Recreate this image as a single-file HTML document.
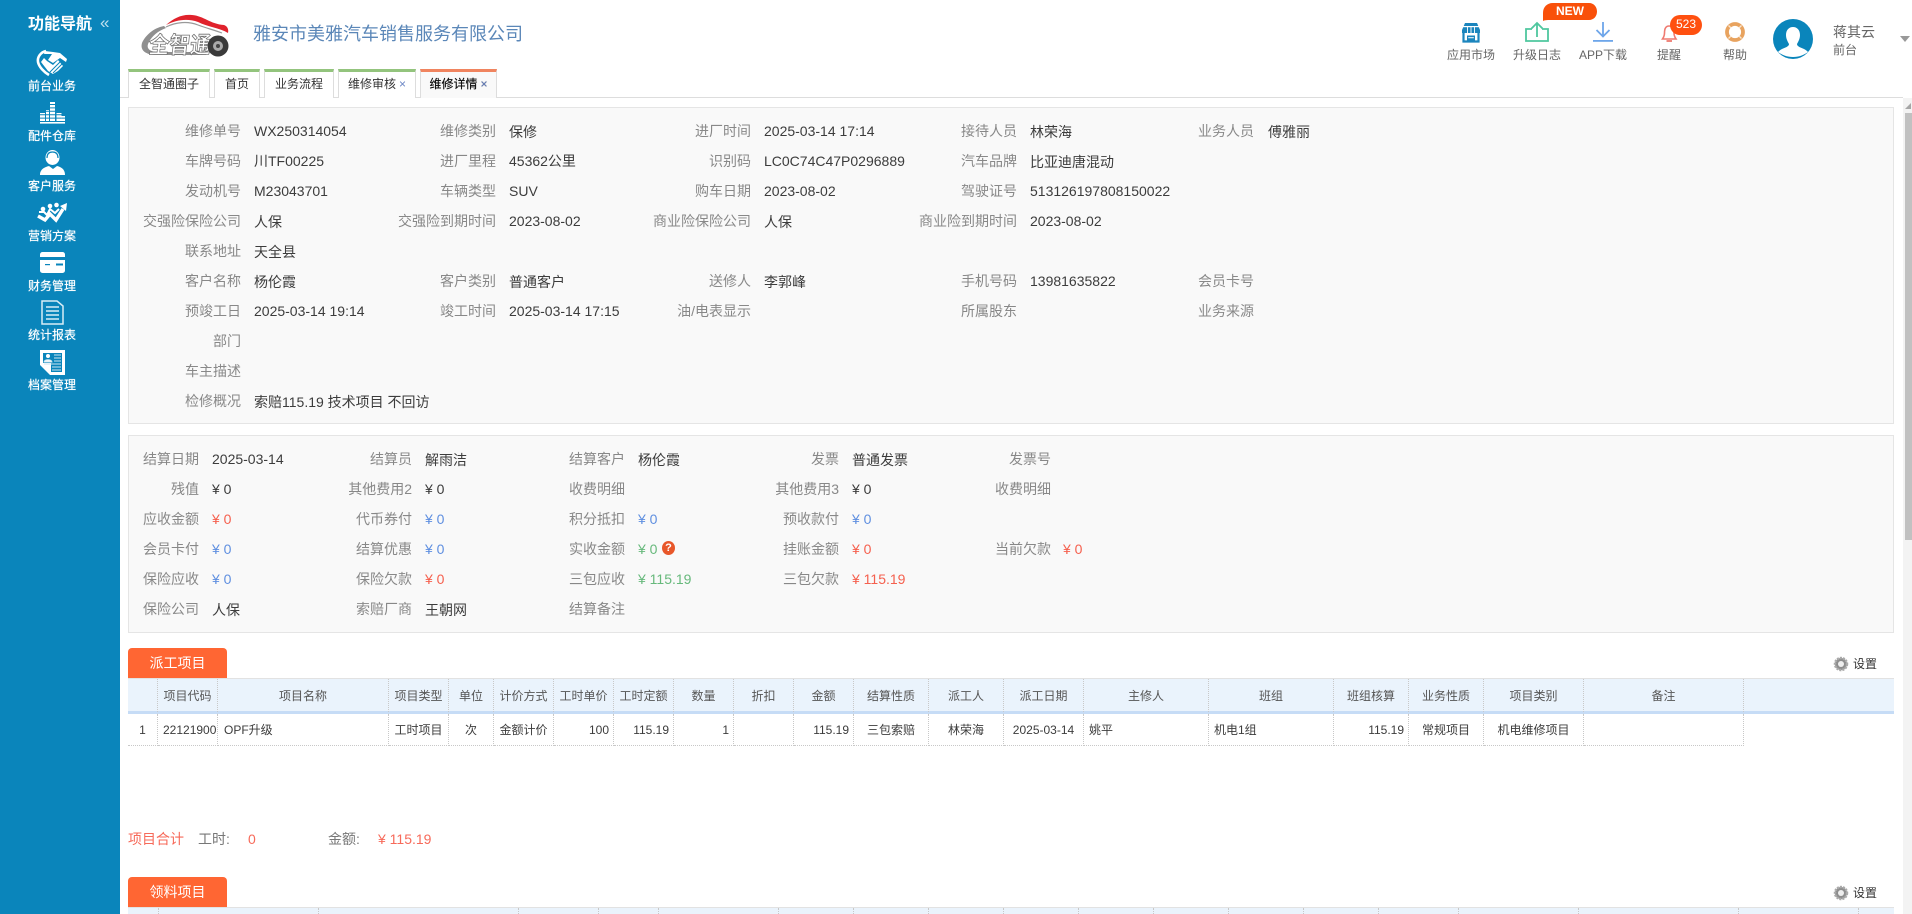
<!DOCTYPE html>
<html lang="zh-CN">
<head>
<meta charset="utf-8">
<title>维修详情</title>
<style>
*{box-sizing:border-box}
html,body{margin:0;padding:0;width:1912px;height:914px;overflow:hidden;background:#fff}
body{position:relative;font-family:"Liberation Sans","Noto Sans CJK SC",sans-serif;font-size:14px;color:#3c3c3c}
.abs{position:absolute}
#side{position:absolute;left:0;top:0;width:120px;height:914px;background:#0a85bb;color:#fff}
#side .t{position:absolute;left:28px;top:14px;font-size:16px;line-height:22px;font-weight:bold;white-space:nowrap}
#side .m{position:absolute;left:0;width:104px;text-align:center;font-size:12px;line-height:16px;white-space:nowrap;text-shadow:0 0 .6px #fff}
#side .cl{position:absolute;left:100px;top:13px;font-size:17px;line-height:20px;color:#bfe0ee}
.co{position:absolute;left:253px;top:21px;font-size:18px;line-height:26px;color:#5b87b8;white-space:nowrap}
.tb{position:absolute;top:69px;height:29px;background:#fff;border:1px solid #ddd;border-top:3px solid #93c47d;border-bottom:0;font-size:12px;line-height:25px;text-align:center;white-space:nowrap;color:#333}
.tb i{font-style:normal;color:#6a85c4;margin-left:3px}
.tb.on{border-top-color:#f0845f;background:#f9f9f9;color:#111;text-shadow:0 0 .4px #111}
.hl{position:absolute;width:80px;margin-left:-40px;text-align:center;font-size:12px;line-height:16px;color:#666;white-space:nowrap;top:47px}
.panel{position:absolute;left:128px;width:1766px;background:#f9f9f9;border:1px solid #e5e5e5}
.r{position:absolute;left:0;top:0;width:1912px;height:20px;line-height:20px;white-space:nowrap}
.r span{position:absolute;top:0;white-space:nowrap}
.r span.z{top:1px}
.l{color:#888;width:200px;text-align:right}
.a{left:41px}.b{left:296px}.c{left:551px}.d{left:817px}.e{left:1054px}
.f{left:254px}.g{left:509px}.h{left:764px}.i{left:1030px}.j{left:1268px}
.k{left:-1px}.m2{left:212px}.n{left:425px}.o{left:639px}.q{left:851px}
.s{left:212px}.u{left:425px}.w{left:638px}.x{left:852px}.y{left:1063px}
.red{color:#f5604e}.blue{color:#5f8fe0}.green{color:#67b97c}
.btn{position:absolute;left:128px;width:99px;height:30px;background:#ff6633;border-radius:4px 4px 0 0;color:#fff;font-size:14px;line-height:30px;text-align:center}
.set{position:absolute;left:1853px;font-size:12px;line-height:16px;color:#333}
.hbg{position:absolute;left:128px;width:1766px;background:#eaf3fc;border-top:1px solid #e2e2e2}
table{position:absolute;left:128px;top:679px;width:1616px;table-layout:fixed;border-collapse:separate;border-spacing:0;font-size:12px}
th,td{padding:0 4px;white-space:nowrap;overflow:hidden;border-right:1px dotted #c8c8c8;text-align:center;font-weight:normal}
th{height:35px;border-bottom:3px solid transparent;color:#555;padding:0}
td{height:32px;border-bottom:1px dotted #c8c8c8;color:#3c3c3c}
td.rt{text-align:right}td.lf{text-align:left;padding-left:5px;padding-right:0}
.sum{position:absolute;top:829px;font-size:14px;line-height:20px;white-space:nowrap}
.tick{position:absolute;top:908px;height:6px;width:0;border-left:1px dotted #c8c8c8}
</style>
</head>
<body>

<div id="side">
  <div class="t">功能导航</div>
  <div class="cl">«</div>
  <svg class="abs" style="left:0;top:0" width="120" height="400" viewBox="0 0 120 400">
    <!-- handshake -->
    <path d="M46 51C41 52 37 57 38 62C39 67 44 72 49 75" fill="none" stroke="#fff" stroke-width="2.6"/>
    <path d="M44 54L52 54L48 60L53 63L60 58L66 62L67 59L60 53L53 52L45 51Z" fill="#fff"/>
    <path d="M41 62L48 71L53 74L58 71L63 66L58 60L53 65L47 61L44 58Z" fill="#fff"/>
    <path d="M50 72L60 62M53 73L62 64" stroke="#0a85bb" stroke-width="1"/>
    <!-- bars -->
    <g stroke="#fff" fill="none" stroke-dasharray="2.4 1">
      <path d="M42.500 121V113" stroke-width="5"/>
      <path d="M47.500 121V110" stroke-width="3"/>
      <path d="M52.500 121V102" stroke-width="5"/>
      <path d="M59 121V113" stroke-width="5"/>
      <path d="M63 121V116" stroke-width="4"/>
    </g>
    <rect x="40" y="122" width="25" height="1.600" fill="#fff"/>
    <!-- person with headset -->
    <ellipse cx="52.500" cy="157.500" rx="7" ry="7.500" fill="#fff"/>
    <path d="M47 158C47 154 49 152 52.500 152C56 152 58 154 58 158" fill="none" stroke="#0a85bb" stroke-width="1.200"/>
    <path d="M40 175C40 169 45 167 49 166L53 169L57 166C61 167 65 169 65 175Z" fill="#fff"/>
    <path d="M48 165L54 167" stroke="#0a85bb" stroke-width="1"/>
    <!-- chart arrow -->
    <path d="M38 216L45 220L50 214L56 220L63 209" fill="none" stroke="#fff" stroke-width="3.400"/>
    <path d="M60 206L67 203L66 211Z" fill="#fff"/>
    <circle cx="43" cy="209" r="2.300" fill="#fff"/><circle cx="50" cy="206" r="2.300" fill="#fff"/><circle cx="56.500" cy="205" r="2.300" fill="#fff"/>
    <path d="M39 212L44 212L47 215L50 209L55 213L59 209" fill="none" stroke="#fff" stroke-width="2"/>
    <!-- card -->
    <rect x="40" y="252" width="25" height="21" rx="2.500" fill="#fff"/>
    <rect x="40" y="257" width="25" height="3" fill="#0a85bb"/>
    <rect x="45" y="264" width="5" height="1.200" fill="#0a85bb"/>
    <rect x="56" y="263.500" width="7" height="2" fill="#0a85bb"/>
    <!-- doc -->
    <path d="M42 301H57L63 306V324H42Z" fill="none" stroke="#d8edf6" stroke-width="1.500"/>
    <path d="M46 307H59M46 311H59M46 315H59M46 319H59" stroke="#d8edf6" stroke-width="1.400"/>
    <!-- profile -->
    <path d="M40 350H65V375H50L40 365Z" fill="#fff"/>
    <path d="M43 353H62V372H51L51 363L43 363Z" fill="#0a85bb"/>
    <circle cx="48" cy="356" r="2" fill="#fff"/>
    <path d="M44 362C44 359 52 359 52 362ZM54 355H61M54 358H61M54 361H61M44 364H61M52 367H61M52 370H61" fill="#fff" stroke="#cfe6f1" stroke-width=".9"/>
  </svg>
  <div class="m" style="top:78px">前台业务</div>
  <div class="m" style="top:128px">配件仓库</div>
  <div class="m" style="top:178px">客户服务</div>
  <div class="m" style="top:228px">营销方案</div>
  <div class="m" style="top:278px">财务管理</div>
  <div class="m" style="top:327px">统计报表</div>
  <div class="m" style="top:377px">档案管理</div>
</div>

<!-- logo -->
<svg class="abs" style="left:136px;top:10px" width="100" height="50" viewBox="136 10 100 50">
  <path d="M166 25C174 18 182 14 192 15C204 16 210 24 224 25C227 26 229 29 228 33C220 28 208 27 198 22C187 18 176 20 166 25Z" fill="#e0222c"/>
  <path d="M166 27C176 22 188 21 198 25C206 28 214 30 222 33" fill="none" stroke="#999" stroke-width="1.200"/>
  <path d="M164 26C153 28 145 36 142 43C140 50 145 54 154 55H206V52H156C148 51 146 47 149 42C152 36 158 31 166 28Z" fill="#8f8f8f"/>
  <text transform="translate(148 53) skewX(-6)" x="0" y="0" font-family="'Noto Sans CJK SC',sans-serif" font-size="23" font-weight="bold" fill="#fff" stroke="#707070" stroke-width=".8" textLength="62" lengthAdjust="spacingAndGlyphs">全智通</text>
  <circle cx="218" cy="46" r="10.500" fill="#3a3a3a"/>
  <circle cx="218" cy="46" r="5" fill="#aaa"/>
  <circle cx="218" cy="46" r="2" fill="#444"/>
</svg>
<div class="co">雅安市美雅汽车销售服务有限公司</div>

<!-- top icons -->
<svg class="abs" style="left:1440px;top:0" width="472" height="64" viewBox="1440 0 472 64">
  <!-- store -->
  <path d="M1465 23H1477L1480 30V33H1462V30Z" fill="#1b85bd"/>
  <rect x="1463" y="26" width="16" height="1.200" fill="#fff"/>
  <path d="M1467.500 27V33M1471 27V33M1474.500 27V33" stroke="#fff" stroke-width=".9"/>
  <path d="M1463.500 33V41.500H1478.500V33" fill="none" stroke="#1b85bd" stroke-width="2.200"/>
  <rect x="1467" y="35.500" width="8" height="5.500" fill="#1b85bd"/>
  <rect x="1468.200" y="37.200" width="5.600" height="1" fill="#fff"/>
  <!-- upload -->
  <path d="M1532 29H1526V41H1548V29H1542" fill="none" stroke="#4fc79f" stroke-width="1.800"/>
  <path d="M1537 37V23M1531.500 28.500L1537 23L1542.500 28.500" fill="none" stroke="#4fc79f" stroke-width="1.800"/>
  <!-- NEW -->
  <path d="M1543 21V13C1543 7 1547 3 1553 3H1589C1594 3 1597 7 1597 11.500C1597 16 1594 20 1589 20H1552C1548 20 1545 20 1543 21Z" fill="#f9500a"/>
  <!-- download -->
  <path d="M1603 22V36M1596.500 30L1603 36.500L1609.500 30" fill="none" stroke="#6ea6ea" stroke-width="1.800"/>
  <rect x="1593" y="40" width="20" height="1.800" fill="#6ea6ea"/>
  <!-- bell -->
  <path d="M1669 26C1665 26 1664.500 30 1664.500 33C1664.500 36 1663.500 37.500 1662.500 39H1676C1675 37.500 1674 36 1674 33C1674 30 1673 26 1669 26Z" fill="none" stroke="#ef7a70" stroke-width="1.600"/>
  <path d="M1666.500 41H1672" stroke="#ef7a70" stroke-width="1.800"/>
  <rect x="1670" y="15" width="32" height="20" rx="10" fill="#ff5010"/>
  <!-- help -->
  <circle cx="1735" cy="32" r="8" fill="none" stroke="#e8a35f" stroke-width="3.800"/>
  <path d="M1728.500 25.500L1731 28M1741.500 25.500L1739 28M1728.500 38.500L1731 36M1741.500 38.500L1739 36" stroke="#f8e6d2" stroke-width="1.400"/>
  <!-- avatar -->
  <circle cx="1793" cy="39" r="20" fill="#0a85bb"/>
  <path d="M1786 35C1786 30 1789 27 1793 27C1797 27 1800 30 1800 35C1800 39 1798 42 1797 44C1797 46 1799 47 1804 49C1806 50 1807 51 1808 52C1804 55 1799 57 1793 57C1787 57 1782 55 1778 52C1779 51 1780 50 1782 49C1787 47 1789 46 1789 44C1788 42 1786 39 1786 35Z" fill="#fff"/>
  <!-- caret -->
  <path d="M1900 36H1910L1905 42Z" fill="#999"/>
</svg>
<div class="abs" style="left:1543px;top:3px;width:54px;height:17px;line-height:17px;text-align:center;color:#fff;font-size:12px;font-weight:bold">NEW</div>
<div class="abs" style="left:1670px;top:15px;width:32px;height:20px;line-height:19px;text-align:center;color:#fff;font-size:12px">523</div>
<div class="hl" style="left:1471px">应用市场</div>
<div class="hl" style="left:1537px">升级日志</div>
<div class="hl" style="left:1603px">APP下载</div>
<div class="hl" style="left:1669px">提醒</div>
<div class="hl" style="left:1735px">帮助</div>
<div class="abs" style="left:1833px;top:22px;font-size:14px;line-height:20px;color:#666">蒋其云</div>
<div class="abs" style="left:1833px;top:42px;font-size:12px;line-height:16px;color:#666">前台</div>

<!-- tabs -->
<div class="abs" style="left:120px;top:97px;width:1783px;height:1px;background:#ddd"></div>
<div class="tb" style="left:128px;width:82px">全智通圈子</div>
<div class="tb" style="left:214px;width:46px">首页</div>
<div class="tb" style="left:264px;width:70px">业务流程</div>
<div class="tb" style="left:338px;width:78px">维修审核<i>×</i></div>
<div class="tb on" style="left:420px;width:77px">维修详情<i>×</i></div>

<!-- scrollbar -->
<div class="abs" style="left:1903px;top:98px;width:9px;height:816px;background:#f3f3f3"></div>
<div class="abs" style="left:1905px;top:113px;width:7px;height:427px;background:#c1c1c1"></div>
<svg class="abs" style="left:1903px;top:102px" width="9" height="8"><path d="M2 7H8V1Z" fill="#a6a6a6"/></svg>

<!-- panel 1 -->
<div class="panel" style="top:107px;height:317px"></div>
<div class="r" style="top:121px"><span class="l a">维修单号</span><span class="f">WX250314054</span><span class="l b">维修类别</span><span class="g z">保修</span><span class="l c">进厂时间</span><span class="h">2025-03-14 17:14</span><span class="l d">接待人员</span><span class="i z">林荣海</span><span class="l e">业务人员</span><span class="j z">傅雅丽</span></div>
<div class="r" style="top:151px"><span class="l a">车牌号码</span><span class="f">川TF00225</span><span class="l b">进厂里程</span><span class="g">45362公里</span><span class="l c">识别码</span><span class="h">LC0C74C47P0296889</span><span class="l d">汽车品牌</span><span class="i z">比亚迪唐混动</span></div>
<div class="r" style="top:181px"><span class="l a">发动机号</span><span class="f">M23043701</span><span class="l b">车辆类型</span><span class="g">SUV</span><span class="l c">购车日期</span><span class="h">2023-08-02</span><span class="l d">驾驶证号</span><span class="i">513126197808150022</span></div>
<div class="r" style="top:211px"><span class="l a">交强险保险公司</span><span class="f z">人保</span><span class="l b">交强险到期时间</span><span class="g">2023-08-02</span><span class="l c">商业险保险公司</span><span class="h z">人保</span><span class="l d">商业险到期时间</span><span class="i">2023-08-02</span></div>
<div class="r" style="top:241px"><span class="l a">联系地址</span><span class="f z">天全县</span></div>
<div class="r" style="top:271px"><span class="l a">客户名称</span><span class="f z">杨伦霞</span><span class="l b">客户类别</span><span class="g z">普通客户</span><span class="l c">送修人</span><span class="h z">李郭峰</span><span class="l d">手机号码</span><span class="i">13981635822</span><span class="l e">会员卡号</span></div>
<div class="r" style="top:301px"><span class="l a">预竣工日</span><span class="f">2025-03-14 19:14</span><span class="l b">竣工时间</span><span class="g">2025-03-14 17:15</span><span class="l c">油/电表显示</span><span class="l d">所属股东</span><span class="l e">业务来源</span></div>
<div class="r" style="top:331px"><span class="l a">部门</span></div>
<div class="r" style="top:361px"><span class="l a">车主描述</span></div>
<div class="r" style="top:391px"><span class="l a">检修概况</span><span class="f z">索赔115.19 技术项目 不回访</span></div>

<!-- panel 2 -->
<div class="panel" style="top:435px;height:198px"></div>
<div class="r" style="top:449px"><span class="l k">结算日期</span><span class="s">2025-03-14</span><span class="l m2">结算员</span><span class="u z">解雨洁</span><span class="l n">结算客户</span><span class="w z">杨伦霞</span><span class="l o">发票</span><span class="x z">普通发票</span><span class="l q">发票号</span></div>
<div class="r" style="top:479px"><span class="l k">残值</span><span class="s">¥ 0</span><span class="l m2">其他费用2</span><span class="u">¥ 0</span><span class="l n">收费明细</span><span class="l o">其他费用3</span><span class="x">¥ 0</span><span class="l q">收费明细</span></div>
<div class="r" style="top:509px"><span class="l k">应收金额</span><span class="s red">¥ 0</span><span class="l m2">代币券付</span><span class="u blue">¥ 0</span><span class="l n">积分抵扣</span><span class="w blue">¥ 0</span><span class="l o">预收款付</span><span class="x blue">¥ 0</span></div>
<div class="r" style="top:539px"><span class="l k">会员卡付</span><span class="s blue">¥ 0</span><span class="l m2">结算优惠</span><span class="u blue">¥ 0</span><span class="l n">实收金额</span><span class="w green">¥ 0</span><span class="l o">挂账金额</span><span class="x red">¥ 0</span><span class="l q">当前欠款</span><span class="y red">¥ 0</span></div>
<div class="r" style="top:569px"><span class="l k">保险应收</span><span class="s blue">¥ 0</span><span class="l m2">保险欠款</span><span class="u red">¥ 0</span><span class="l n">三包应收</span><span class="w green">¥ 115.19</span><span class="l o">三包欠款</span><span class="x red">¥ 115.19</span></div>
<div class="r" style="top:599px"><span class="l k">保险公司</span><span class="s z">人保</span><span class="l m2">索赔厂商</span><span class="u z">王朝网</span><span class="l n">结算备注</span></div>
<div class="abs" style="left:662px;top:541px;width:13px;height:14px;border-radius:50%;background:#e8572a;color:#fff;font-size:11px;font-weight:bold;line-height:14px;text-align:center">?</div>

<!-- dispatch -->
<div class="btn" style="top:648px">派工项目</div>
<svg class="abs" style="left:1833px;top:656px" width="16" height="16" viewBox="0 0 16 16"><circle cx="8" cy="8" r="6" fill="#8d8d8d" stroke="#aaa" stroke-width="2.500" stroke-dasharray="2 1"/><circle cx="8" cy="8" r="3" fill="#eee"/></svg>
<div class="set" style="top:656px">设置</div>
<div class="hbg" style="top:678px;height:36px"></div>
<div class="abs" style="left:128px;top:711px;width:1766px;height:3px;background:#c6dcf6"></div>
<table>
<colgroup><col style="width:30px"><col style="width:60px"><col style="width:171px"><col style="width:60px"><col style="width:45px"><col style="width:60px"><col style="width:60px"><col style="width:60px"><col style="width:60px"><col style="width:60px"><col style="width:60px"><col style="width:75px"><col style="width:75px"><col style="width:80px"><col style="width:125px"><col style="width:125px"><col style="width:75px"><col style="width:75px"><col style="width:100px"><col style="width:160px"></colgroup>
<tr><th></th><th>项目代码</th><th>项目名称</th><th>项目类型</th><th>单位</th><th>计价方式</th><th>工时单价</th><th>工时定额</th><th>数量</th><th>折扣</th><th>金额</th><th>结算性质</th><th>派工人</th><th>派工日期</th><th>主修人</th><th>班组</th><th>班组核算</th><th>业务性质</th><th>项目类别</th><th>备注</th></tr>
<tr><td>1</td><td class="lf">22121900</td><td class="lf" style="padding-left:6px">OPF升级</td><td>工时项目</td><td>次</td><td>金额计价</td><td class="rt">100</td><td class="rt">115.19</td><td class="rt">1</td><td></td><td class="rt">115.19</td><td>三包索赔</td><td>林荣海</td><td>2025-03-14</td><td class="lf">姚平</td><td class="lf">机电1组</td><td class="rt">115.19</td><td>常规项目</td><td>机电维修项目</td><td></td></tr>
</table>

<!-- summary -->
<div class="sum" style="left:128px;color:#f76a5a">项目合计</div>
<div class="sum" style="left:198px;color:#777">工时:</div>
<div class="sum" style="left:248px;color:#f76a5a">0</div>
<div class="sum" style="left:328px;color:#777">金额:</div>
<div class="sum" style="left:378px;color:#f76a5a">¥ 115.19</div>

<!-- materials -->
<div class="btn" style="top:877px">领料项目</div>
<svg class="abs" style="left:1833px;top:885px" width="16" height="16" viewBox="0 0 16 16"><circle cx="8" cy="8" r="6" fill="#8d8d8d" stroke="#aaa" stroke-width="2.500" stroke-dasharray="2 1"/><circle cx="8" cy="8" r="3" fill="#eee"/></svg>
<div class="set" style="top:885px">设置</div>
<div class="hbg" style="top:907px;height:7px"></div>
<div class="tick" style="left:158px"></div><div class="tick" style="left:318px"></div><div class="tick" style="left:518px"></div><div class="tick" style="left:598px"></div><div class="tick" style="left:658px"></div><div class="tick" style="left:778px"></div><div class="tick" style="left:853px"></div><div class="tick" style="left:928px"></div><div class="tick" style="left:1003px"></div><div class="tick" style="left:1078px"></div><div class="tick" style="left:1153px"></div><div class="tick" style="left:1228px"></div><div class="tick" style="left:1303px"></div><div class="tick" style="left:1378px"></div><div class="tick" style="left:1458px"></div><div class="tick" style="left:1578px"></div><div class="tick" style="left:1738px"></div><div class="tick" style="left:1858px"></div>

</body>
</html>
